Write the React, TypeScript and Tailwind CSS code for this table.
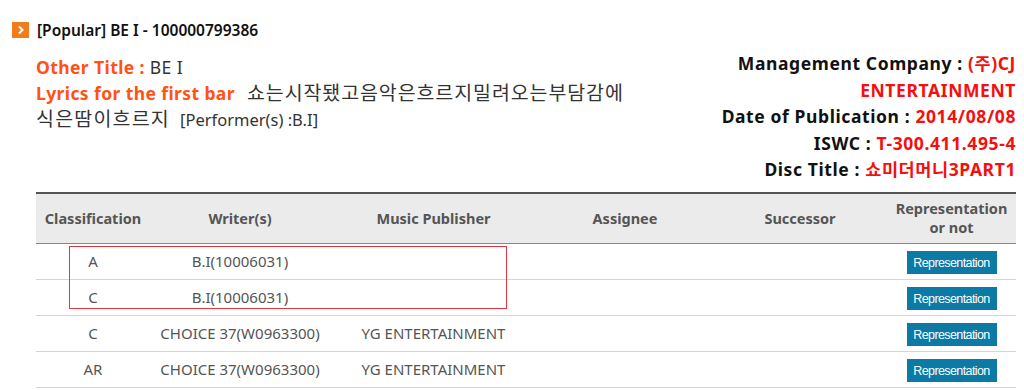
import React from "react";

const font = { fontFamily: '"Noto Sans", "Noto Sans CJK KR", sans-serif' };

function Btn() {
  return (
    <span
      className="inline-flex items-center justify-center w-[90px] h-[23px] bg-[#0b7aa5] text-white text-[12.5px] tracking-[-0.6px]"
      style={{ fontFamily: '"Liberation Sans Narrow", "Liberation Sans", sans-serif' }}
    >
      Representation
    </span>
  );
}

const rows = [
  { c: "A", w: "B.I(10006031)", p: "" },
  { c: "C", w: "B.I(10006031)", p: "" },
  { c: "C", w: "CHOICE 37(W0963300)", p: "YG ENTERTAINMENT" },
  { c: "AR", w: "CHOICE 37(W0963300)", p: "YG ENTERTAINMENT" },
];

export default function App() {
  return (
    <div className="w-[1024px] h-[390px] bg-white overflow-hidden text-[#333]" style={font}>
      <div className="flex items-center pl-[12px] pt-[20px] gap-[8px]">
        <span className="w-[17px] h-[16px] bg-[#f07c1c] flex items-center justify-center">
          <svg width="8" height="10" viewBox="0 0 8 10">
            <path d="M2 1.5 L5.5 5 L2 8.5" stroke="white" strokeWidth="2" fill="none" />
          </svg>
        </span>
        <span className="text-[15.5px] font-semibold text-[#111] leading-[20px] tracking-[0px]">
          [Popular] BE I - 100000799386
        </span>
      </div>

      <div className="flex justify-between pl-[36px] pr-[8px]">
        <div className="w-[640px] pt-[14px] text-[17.5px] leading-[26px] text-[#333] tracking-[0.4px]">
          <div>
            <span className="font-bold text-[#ff5214]">Other Title :</span> BE I
          </div>
          <div>
            <span className="font-bold text-[#ff5214]">Lyrics for the first bar</span>
            <span className="ml-[12px] text-[19.5px] tracking-[0.9px]">쇼는시작됐고음악은흐르지밀려오는부담감에</span>
          </div>
          <div>
            <span className="text-[19.5px] tracking-[1.2px]">식은땀이흐르지</span>
            <span className="ml-[10px] text-[16.5px] tracking-[0px]">[Performer(s) :B.I]</span>
          </div>
        </div>
        <div className="pt-[10px] text-right text-[17.5px] leading-[26.5px] font-bold text-[#111] tracking-[0.6px]">
          <div>
            Management Company : <span className="text-[#f50f0f]">(주)CJ</span>
          </div>
          <div className="text-[#f50f0f]">ENTERTAINMENT</div>
          <div>
            Date of Publication : <span className="text-[#f50f0f]">2014/08/08</span>
          </div>
          <div>
            ISWC : <span className="text-[#f50f0f]">T-300.411.495-4</span>
          </div>
          <div>
            Disc Title : <span className="text-[#f50f0f]">쇼미더머니3PART1</span>
          </div>
        </div>
      </div>

      <div className="relative ml-[36px] mt-[9px] w-[980px]">
        <table className="w-full border-collapse table-fixed text-[15px]">
          <colgroup>
            <col className="w-[114px]" />
            <col className="w-[180px]" />
            <col className="w-[207px]" />
            <col className="w-[176px]" />
            <col className="w-[174px]" />
            <col className="w-[129px]" />
          </colgroup>
          <thead>
            <tr className="bg-[#ebebeb] border-t-2 border-t-[#555] border-b border-b-[#888] h-[51px] text-[#555] leading-[19px] text-[14.5px]">
              <th className="font-bold">Classification</th>
              <th className="font-bold">Writer(s)</th>
              <th className="font-bold">Music Publisher</th>
              <th className="font-bold">Assignee</th>
              <th className="font-bold">Successor</th>
              <th className="font-bold">
                Representation
                <br />
                or not
              </th>
            </tr>
          </thead>
          <tbody>
            {rows.map((r, i) => (
              <tr key={i} className="h-[36px] border-b border-b-[#d4d4d4] text-[#555]">
                <td className="text-center">{r.c}</td>
                <td className="text-center">{r.w}</td>
                <td className="text-center">{r.p}</td>
                <td></td>
                <td></td>
                <td className="text-center align-middle pt-[1px]">
                  <Btn />
                </td>
              </tr>
            ))}
          </tbody>
        </table>
        <div className="absolute left-[33px] top-[54px] w-[438px] h-[63px] border border-[#e2373f] pointer-events-none" />
      </div>
    </div>
  );
}
